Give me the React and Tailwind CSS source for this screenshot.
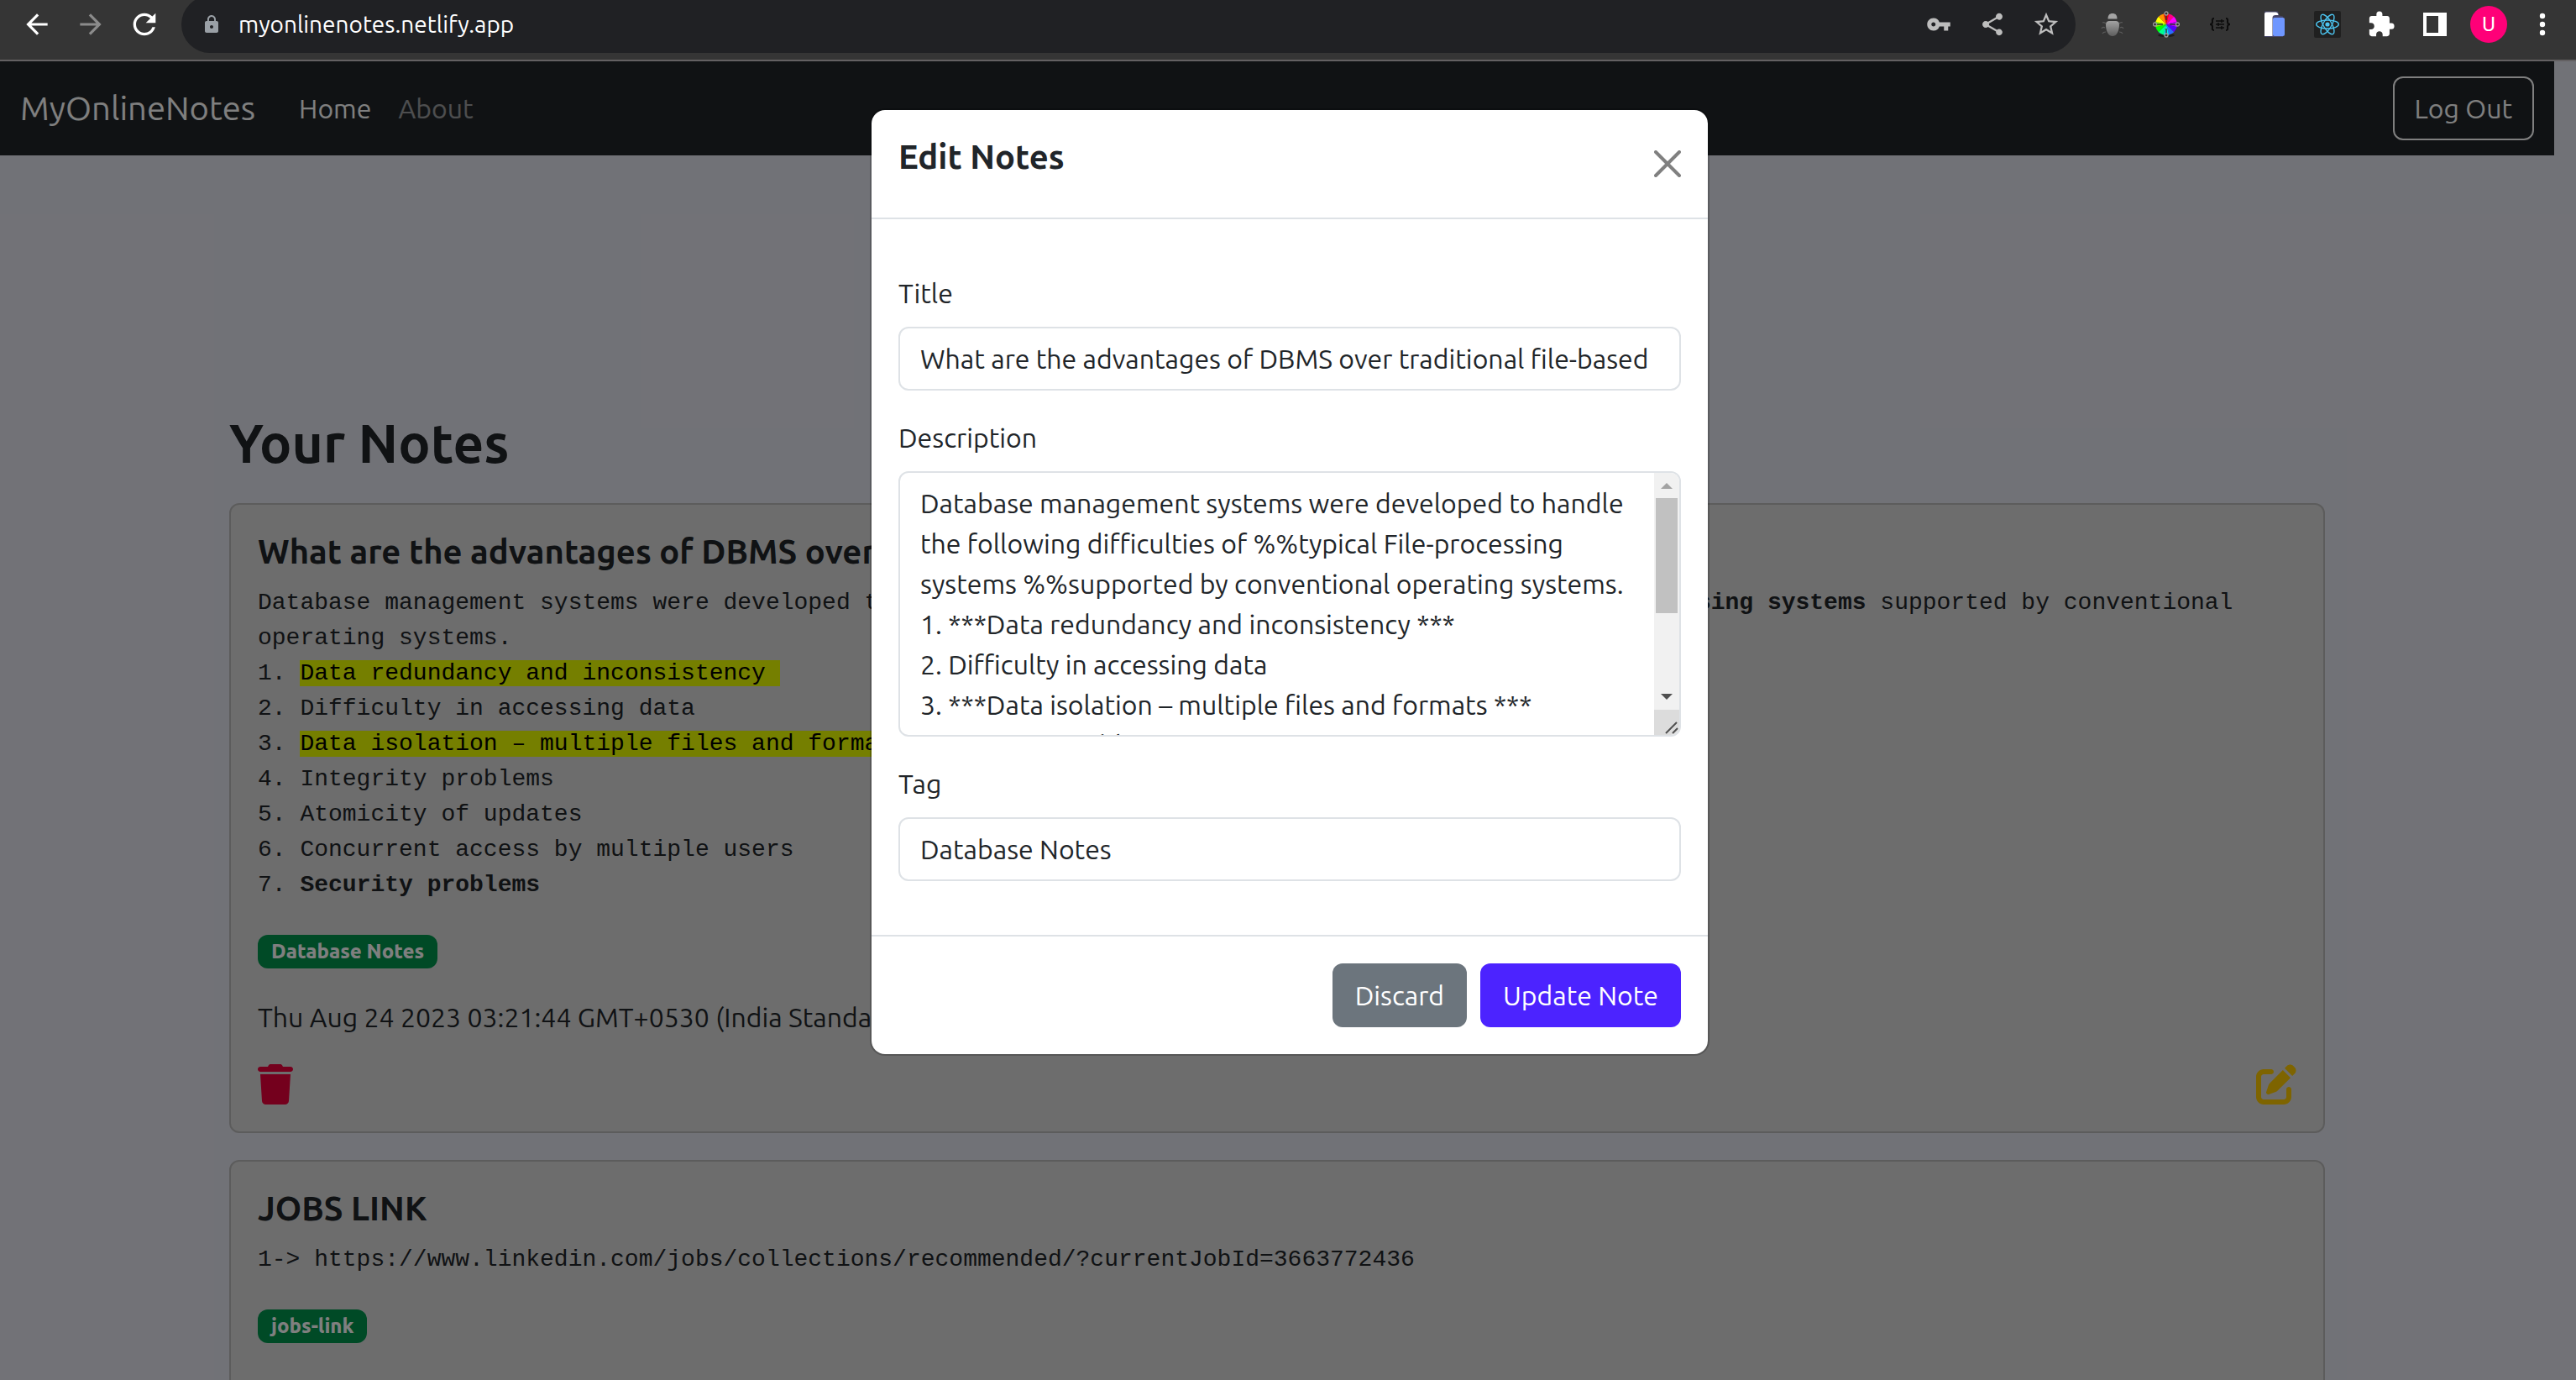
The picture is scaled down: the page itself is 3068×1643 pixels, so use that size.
import React from "react";
import {
  MdArrowBack,
  MdArrowForward,
  MdRefresh,
  MdLock,
  MdVpnKey,
  MdShare,
  MdStarBorder,
  MdExtension,
} from "react-icons/md";
import { FaTrash, FaPenToSquare } from "react-icons/fa6";

function BugIcon() {
  return (
    <svg viewBox="0 0 28 28" className="size-7" aria-hidden="true">
      <defs>
        <linearGradient id="bug" x1="0" y1="0" x2="0" y2="1">
          <stop offset="0" stopColor="#a2a2a2" />
          <stop offset="1" stopColor="#5e5e5e" />
        </linearGradient>
      </defs>
      <path d="M8.5 7.5C8.5 3 10.5 1 14 1s5.500 2 5.500 6.500z" fill="#a3a3a3" />
      <path d="M6 14c0-3 2-4 4-4h8c2 0 4 1 4 4 0 8-3 14-8 14S6 22 6 14z" fill="url(#bug)" />
      <g fill="none" stroke="#5c5c5c" strokeWidth="1.200">
        <path d="M6 13c-1-1-2-2-4-1M5 18c-2-1-3-1-4 1M6 23c-2 0-3 0-4 2M22 13c1-1 2-2 4-1M23 18c2-1 3-1 4 1M22 23c2 0 3 0 4 2" />
      </g>
    </svg>
  );
}

function ColorWheelIcon() {
  const slices = [
    ["#ff0000", -15],
    ["#ff0080", 15],
    ["#ff00ff", 45],
    ["#b400ff", 75],
    ["#5a00ff", 105],
    ["#2a6bff", 135],
    ["#00e5ff", 165],
    ["#00ff90", 195],
    ["#00ff00", 225],
    ["#80ff00", 255],
    ["#ffff00", 285],
    ["#ff9000", 315],
  ];
  return (
    <svg viewBox="0 0 32 32" className="size-8" aria-hidden="true">
      <ellipse cx="16" cy="29" rx="10" ry="2" fill="#1c1c1c" />
      {slices.map(([color, angle]) => (
        <path key={angle} d="M16 16V3a13 13 0 0 1 6.600 1.800z" fill={color} transform={`rotate(${angle} 16 16)`} />
      ))}
      <path d="M3 16h9M20 16h9M16 3v8M16 21v8" stroke="#333" strokeWidth="1.500" />
      <g fill="#2b2b2b" stroke="#9a9a9a" strokeWidth="1.300">
        <circle cx="16" cy="3" r="2" />
        <circle cx="16" cy="29" r="2" />
        <circle cx="2.500" cy="16" r="2" />
        <circle cx="29.500" cy="16" r="2" />
      </g>
    </svg>
  );
}

function BracesIcon() {
  return (
    <svg viewBox="0 0 26 18" className="h-[18px] w-[26px]" fill="none" stroke="#0c0c0c" strokeWidth="2" aria-hidden="true">
      <path d="M6 2C3 2 4 4 4 6s-.5 3-3 3c2.500 0 3 1 3 3s-1 4 2 4M20 2c3 0 2 2 2 4s.5 3 3 3c-2.500 0-3 1-3 3s1 4-2 4" />
      <path d="M8 5h10M8 9h10M8 13h10" strokeWidth="1.500" />
      <path d="M15 3v4M11 7v4M15 11v4" strokeWidth="1.500" />
    </svg>
  );
}

function DevicesIcon() {
  return (
    <svg viewBox="0 0 28 32" className="h-8 w-7" aria-hidden="true">
      <path d="M3 .5h16l1.500 5 4.500 1V31H3z" fill="#47466a" />
      <path d="M3 30V4c0-1.500.8-2.500 2-2.500h11c2 0 3.500 1.500 3.500 3.500H16c-2 0-3.500 1-3.500 3v22z" fill="#fff" />
      <rect x="13" y="8" width="14" height="22" rx="2" fill="#6f97ff" />
    </svg>
  );
}

function ReactIcon() {
  return (
    <svg viewBox="0 0 32 32" className="size-8" aria-hidden="true">
      <rect width="32" height="32" rx="2" fill="#202020" />
      <circle cx="16" cy="16" r="2.600" fill="#4cc4f0" />
      <g fill="none" stroke="#4cc4f0" strokeWidth="1.400">
        <ellipse cx="16" cy="16" rx="13.300" ry="5" />
        <ellipse cx="16" cy="16" rx="13.300" ry="5" transform="rotate(60 16 16)" />
        <ellipse cx="16" cy="16" rx="13.300" ry="5" transform="rotate(120 16 16)" />
      </g>
    </svg>
  );
}

function SidePanelIcon() {
  return (
    <svg viewBox="0 0 28 28" className="size-7" aria-hidden="true">
      <path d="M0 0h28v28H0zM4 4v20h14V4z" fill="#fff" fillRule="evenodd" />
    </svg>
  );
}

function DotsIcon() {
  return (
    <svg viewBox="0 0 8 28" className="h-7 w-2" fill="#fff" aria-hidden="true">
      <circle cx="4" cy="4" r="3.200" />
      <circle cx="4" cy="14" r="3.200" />
      <circle cx="4" cy="24" r="3.200" />
    </svg>
  );
}

function BarButton({ label, children }) {
  return (
    <button type="button" aria-label={label} className="flex h-[58px] w-16 shrink-0 items-center justify-center">
      {children}
    </button>
  );
}

function BrowserBar() {
  return (
    <div className="flex h-[73px] shrink-0 items-start overflow-hidden border-b-2 border-[#636062] bg-[#353535] pr-2 pl-3 text-white">
      <BarButton label="Back">
        <MdArrowBack className="size-[38px]" />
      </BarButton>
      <BarButton label="Forward">
        <MdArrowForward className="size-[38px] text-[#8b8b8b]" />
      </BarButton>
      <BarButton label="Reload">
        <MdRefresh className="size-10" />
      </BarButton>
      <div className="-mt-[5px] mr-3 ml-3 flex h-[68px] grow items-center rounded-full bg-[#202124] pr-[3px] pl-6 text-[#bdbdbd]">
        <MdLock className="size-6 shrink-0 text-[#9aa0a6]" />
        <input
          aria-label="Address"
          defaultValue="myonlinenotes.netlify.app"
          className="ml-5 min-w-0 grow bg-transparent text-[28px] text-white outline-none"
        />
        <BarButton label="Passwords">
          <MdVpnKey className="size-[30px]" />
        </BarButton>
        <BarButton label="Share">
          <MdShare className="size-8" />
        </BarButton>
        <BarButton label="Bookmark">
          <MdStarBorder className="size-[34px]" />
        </BarButton>
      </div>
      <BarButton label="Bug extension"><BugIcon /></BarButton>
      <BarButton label="Color extension"><ColorWheelIcon /></BarButton>
      <BarButton label="Formatter extension"><BracesIcon /></BarButton>
      <BarButton label="Mobile view extension"><DevicesIcon /></BarButton>
      <BarButton label="React tools"><ReactIcon /></BarButton>
      <BarButton label="Extensions"><MdExtension className="size-[34px]" /></BarButton>
      <BarButton label="Side panel"><SidePanelIcon /></BarButton>
      <BarButton label="Profile">
        <span className="flex size-11 items-center justify-center rounded-full bg-[#ff0078] font-['Roboto',sans-serif] text-2xl">U</span>
      </BarButton>
      <BarButton label="Menu"><DotsIcon /></BarButton>
    </div>
  );
}

function NavBar() {
  return (
    <nav className="flex h-28 items-center bg-[#212529] px-6 text-[32px] text-white">
      <a href="#home" className="text-[40px]">MyOnlineNotes</a>
      <a href="#home" className="ml-[52px]">Home</a>
      <a href="#about" className="ml-8 text-white/55">About</a>
      <button type="button" className="ml-auto h-[76px] rounded-xl border-2 border-white px-6">Log Out</button>
    </nav>
  );
}

function Mark({ children }) {
  return <mark className="bg-[#eaff00] text-black">{children}</mark>;
}

function NoteCard({ title, children, tag, date }) {
  return (
    <article className="rounded-xl border-2 border-[#b9b9b9] bg-[#dbdbdb] p-8">
      <h2 className="text-[40px] leading-[48px] font-semibold">{title}</h2>
      <div className="mt-4 font-['Liberation_Mono',monospace] text-[28px] leading-[42px] whitespace-pre-wrap">{children}</div>
      <div className="mt-[38px] flex">
        <span className="h-10 rounded-xl bg-[#00944d] px-4 text-2xl leading-10 font-extrabold text-white">{tag}</span>
      </div>
      <p className="mt-[34px] min-h-12 text-[32px] leading-[48px]">{date}</p>
      <div className="mt-8 flex justify-between">
        <button type="button" aria-label="Delete note" className="text-[#e8003a]">
          <FaTrash className="h-12 w-[42px]" />
        </button>
        <button type="button" aria-label="Edit note" className="text-[#fcc800]">
          <FaPenToSquare className="size-12" />
        </button>
      </div>
    </article>
  );
}

const description = [
  "Database management systems were developed to handle",
  "the following difficulties of %%typical File-processing",
  "systems %%supported by conventional operating systems.",
  "1. ***Data redundancy and inconsistency ***",
  "2. Difficulty in accessing data",
  "3. ***Data isolation – multiple files and formats ***",
  "4. Integrity problems",
].join("\n");

function EditDialog() {
  return (
    <section
      role="dialog"
      aria-labelledby="dialog-title"
      className="w-full max-w-[1000px] rounded-[18px] border-2 border-black/20 bg-white bg-clip-padding text-[32px]"
    >
      <header className="flex items-center justify-between border-b-2 border-[#dee2e6] px-8 pt-8 pb-8">
        <h2 id="dialog-title" className="mb-4 text-[40px] leading-[48px] font-semibold">Edit Notes</h2>
        <button type="button" aria-label="Close">
          <svg viewBox="0 0 32 32" className="size-8" stroke="#808080" strokeWidth="4" strokeLinecap="round" aria-hidden="true">
            <path d="M2 2l28 28M30 2L2 30" />
          </svg>
        </button>
      </header>
      <form className="flex flex-col gap-8 px-8 py-16 leading-[48px]">
        <div className="flex flex-col gap-4">
          <label htmlFor="title">Title</label>
          <input
            id="title"
            defaultValue="What are the advantages of DBMS over traditional file-based"
            className="h-[76px] rounded-xl border-2 border-[#dee2e6] px-6 outline-none"
          />
        </div>
        <div className="flex flex-col gap-4">
          <label htmlFor="description">Description</label>
          <div className="flex h-[316px] overflow-hidden rounded-xl border-2 border-[#dee2e6]">
            <textarea
              id="description"
              defaultValue={description}
              wrap="off"
              className="min-w-0 grow resize-none overflow-hidden pt-3 pl-6 outline-none"
            />
            <div className="flex w-[30px] shrink-0 flex-col items-center bg-[#f1f1f1]">
              <svg viewBox="0 0 30 30" className="size-[30px] shrink-0" aria-hidden="true">
                <path d="M15 12l7 7H8z" fill="#a3a3a3" />
              </svg>
              <div className="h-[137px] w-[26px] bg-[#c1c1c1]" />
              <svg viewBox="0 0 30 30" className="mt-auto size-[30px] shrink-0" aria-hidden="true">
                <path d="M15 18l-7-7h14z" fill="#505050" />
              </svg>
              <svg viewBox="0 0 30 30" className="size-[30px] shrink-0 bg-[#dcdcdc]" aria-hidden="true">
                <path d="M14 28l13-13M22 28l6-6" stroke="#505050" strokeWidth="2" />
              </svg>
            </div>
          </div>
        </div>
        <div className="flex flex-col gap-4">
          <label htmlFor="tag">Tag</label>
          <input id="tag" defaultValue="Database Notes" className="h-[76px] rounded-xl border-2 border-[#dee2e6] px-6 outline-none" />
        </div>
      </form>
      <footer className="flex justify-end gap-4 border-t-2 border-[#dee2e6] p-8 text-white">
        <button type="button" className="h-[76px] rounded-xl bg-[#6c757d] px-[27px]">Discard</button>
        <button type="button" className="h-[76px] rounded-xl bg-[#4c23ff] px-[27px]">Update Note</button>
      </footer>
    </section>
  );
}

export default function App() {
  return (
    <div className="flex h-screen flex-col overflow-hidden font-['Ubuntu','Noto_Sans',sans-serif] text-[#212529]">
      <BrowserBar />
      <div className="relative min-h-0 grow overflow-hidden bg-[#e3e4ee] pr-[26px]">
        <NavBar />
        <main className="mx-auto max-w-[2496px] pt-[304px]">
          <h1 className="text-[64px] leading-[76px] font-semibold">Your Notes</h1>
          <div className="mt-[34px] flex flex-col gap-8">
            <NoteCard
              title="What are the advantages of DBMS over traditional file-based"
              tag="Database Notes"
              date="Thu Aug 24 2023 03:21:44 GMT+0530 (India Standard Time)"
            >
              Database management systems were developed to handle the following difficulties of{" "}
              <b>typical File-processing systems</b> supported by conventional operating systems.{"\n"}
              1. <Mark>{"Data redundancy and inconsistency "}</Mark>{"\n"}
              2. Difficulty in accessing data{"\n"}
              3. <Mark>{"Data isolation – multiple files and formats "}</Mark>{"\n"}
              4. Integrity problems{"\n"}
              5. Atomicity of updates{"\n"}
              6. Concurrent access by multiple users{"\n"}
              7. <b>Security problems</b>
            </NoteCard>
            <NoteCard title="JOBS LINK" tag="jobs-link">
              {"1-> https://www.linkedin.com/jobs/collections/recommended/?currentJobId=3663772436"}
            </NoteCard>
          </div>
        </main>
        <div className="absolute inset-0 flex items-start justify-center bg-black/50 pt-14 pl-1">
          <EditDialog />
        </div>
      </div>
    </div>
  );
}
